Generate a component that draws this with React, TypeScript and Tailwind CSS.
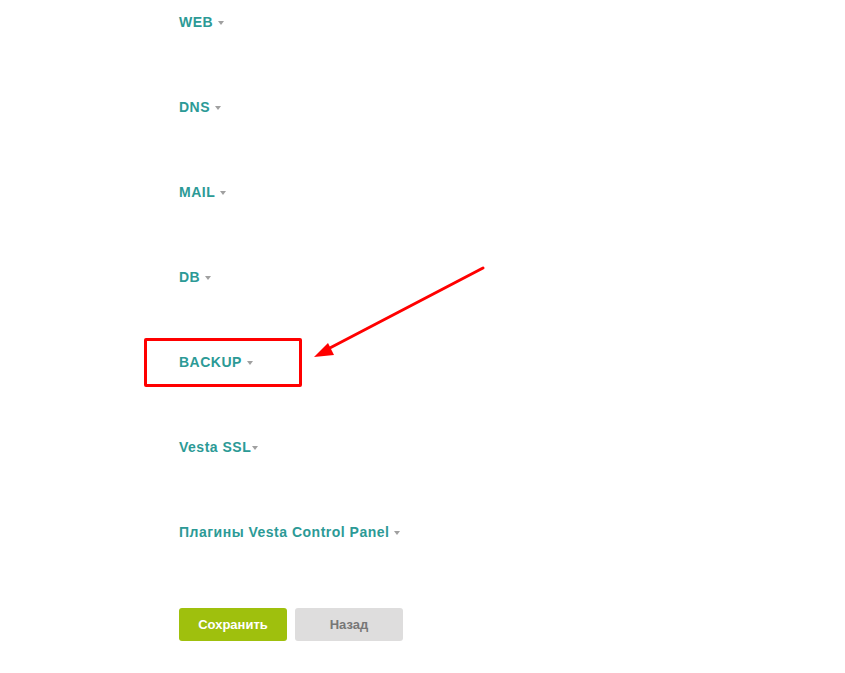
import React from "react";

const sections = [
  { label: "WEB", tight: false },
  { label: "DNS", tight: false },
  { label: "MAIL", tight: false },
  { label: "DB", tight: false },
  { label: "BACKUP", tight: false },
  { label: "Vesta SSL", tight: true },
  { label: "Плагины Vesta Control Panel", tight: false },
];

function Caret({ tight }: { tight: boolean }) {
  return (
    <span
      className={`inline-block w-0 h-0 border-l-[3.5px] border-r-[3.5px] border-t-[4px] border-l-transparent border-r-transparent border-t-[#a0a0a0] align-middle ${
        tight ? "ml-[1px]" : "ml-[5px]"
      }`}
    />
  );
}

export default function App() {
  return (
    <div className="relative w-[845px] h-[673px] bg-white font-['Liberation_Sans',Arial,sans-serif] overflow-hidden">
      <div className="pl-[179px] pt-[10px]">
        {sections.map((s) => (
          <div key={s.label} className="h-[85px]">
            <span className="text-[14px] leading-[20px] font-bold tracking-[0.5px] text-[#2c9a96] cursor-pointer">
              {s.label}
              <Caret tight={s.tight} />
            </span>
          </div>
        ))}
        <div className="flex gap-[8px] mt-[3px]">
          <button className="w-[108px] h-[33px] rounded-[3px] bg-[#9fc00d] text-white text-[13px] font-bold">
            Сохранить
          </button>
          <button className="w-[108px] h-[33px] rounded-[3px] bg-[#dedddd] text-[#777777] text-[13px] font-bold">
            Назад
          </button>
        </div>
      </div>

      {/* annotation: highlight box */}
      <div className="absolute left-[144px] top-[338px] w-[158px] h-[49px] border-[3px] border-[#ff0000] rounded-[2px]" />

      {/* annotation: arrow */}
      <svg className="absolute left-0 top-0" width="845" height="673">
        <line x1="483" y1="268" x2="326" y2="350" stroke="#ff0000" strokeWidth="3" strokeLinecap="round" />
        <polygon points="314,357 328,343 334,355" fill="#ff0000" />
      </svg>
    </div>
  );
}
